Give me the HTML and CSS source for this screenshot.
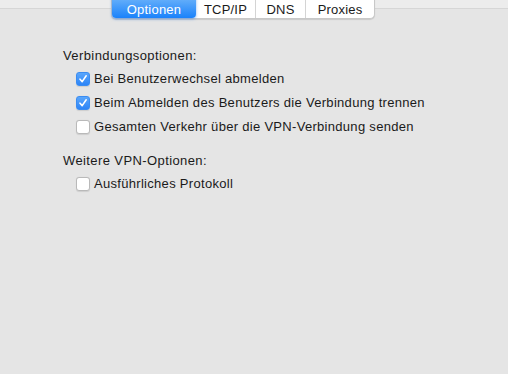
FILE: index.html
```html
<!DOCTYPE html>
<html lang="de">
<head>
    <meta charset="UTF-8">
    <title>VPN Optionen</title>
    <link rel="stylesheet" href="styles.css">
</head>
<body>
    <div class="top-band"></div>
    <div class="tabs">
        <span class="tab active">Optionen</span>
        <span class="tab tcp">TCP/IP</span>
        <span class="tab dns">DNS</span>
        <span class="tab proxies">Proxies</span>
    </div>
    <div class="panel">
        <div class="group-title">Verbindungsoptionen:</div>
        <label class="option">
            <span class="box checked">
                <svg width="10" height="10" viewBox="0 0 10 10"><path d="M2 5.2 L4.2 7.6 L8.2 1.8" fill="none" stroke="#fff" stroke-width="1.6" stroke-linecap="round" stroke-linejoin="round"/></svg>
            </span>
            Bei Benutzerwechsel abmelden
        </label>
        <label class="option">
            <span class="box checked">
                <svg width="10" height="10" viewBox="0 0 10 10"><path d="M2 5.2 L4.2 7.6 L8.2 1.8" fill="none" stroke="#fff" stroke-width="1.6" stroke-linecap="round" stroke-linejoin="round"/></svg>
            </span>
            Beim Abmelden des Benutzers die Verbindung trennen
        </label>
        <label class="option">
            <span class="box"></span>
            Gesamten Verkehr über die VPN-Verbindung senden
        </label>
        <div class="group-title second">Weitere VPN-Optionen:</div>
        <label class="option">
            <span class="box"></span>
            Ausführliches Protokoll
        </label>
    </div>
</body>
</html>
```

FILE: styles.css
```css
body {
    margin: 0;
    width: 508px;
    height: 374px;
    background-color: #e5e5e5;
    font-family: "Liberation Sans", Arial, sans-serif;
    font-size: 13px;
    color: #1a1a1a;
    position: relative;
    overflow: hidden;
}

.top-band {
    height: 8px;
    background-color: #ececec;
    border-bottom: 1px solid #d6d6d6;
}

.tabs {
    position: absolute;
    top: -3px;
    left: 111px;
    display: flex;
    height: 21px;
    background: #fff;
    border: 1px solid #c8c8c8;
    border-top: none;
    border-radius: 0 0 5px 5px;
    box-shadow: 0 1px 1px rgba(0, 0, 0, 0.12);
    letter-spacing: 0.2px;
}

.tab {
    display: flex;
    align-items: center;
    justify-content: center;
    padding-top: 3px;
    border-left: 1px solid #d4d4d4;
    color: #1a1a1a;
}

.tab.active {
    width: 84px;
    border-left: none;
    color: #fff;
    background: linear-gradient(#6cb3fa, #1a82fb);
    border-radius: 0 0 4px 4px;
    box-shadow: 0 1px 3px rgba(40, 120, 230, 0.55);
}

.tab.tcp {
    width: 59px;
    border-left: none;
}

.tab.dns {
    width: 49px;
}

.tab.proxies {
    width: 68px;
}

.panel {
    padding: 38px 0 0 63px;
    letter-spacing: 0.3px;
}

.group-title {
    height: 17px;
    line-height: 17px;
    margin-bottom: 6px;
    letter-spacing: 0.4px;
}

.group-title.second {
    margin-top: 17px;
}

.option {
    display: flex;
    align-items: center;
    height: 17px;
    margin: 0 0 7px 13px;
    gap: 4px;
}

.box {
    width: 12px;
    height: 12px;
    border: 1px solid #b9b9b9;
    border-radius: 3px;
    background: #fff;
    display: flex;
    align-items: center;
    justify-content: center;
    box-shadow: 0 0.5px 1px rgba(0, 0, 0, 0.1);
}

.box.checked {
    border-color: #3a8cf2;
    background: linear-gradient(#5aa6fb, #2d85f7);
}
```
